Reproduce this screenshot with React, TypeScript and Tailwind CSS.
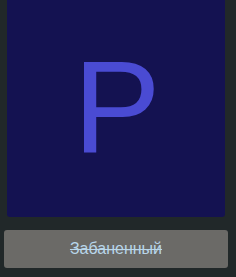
export default function App() {
  return (
    <div className="w-[236px] h-[277px] bg-[#212829] flex flex-col" style={{ fontFamily: '"Liberation Sans", Arial, sans-serif' }}>
      <div className="px-[7px] w-full">
        <div className="h-[217px] w-[218px] bg-[#141251] rounded-b-[3px] flex items-center justify-center">
          <span className="text-[131px] leading-none text-[#4a4bd3] mt-[-4px] ml-[2px]" style={{ fontFamily: '"Liberation Sans", Arial, sans-serif' }}>P</span>
        </div>
      </div>
      <div className="px-[4px] mt-[13px]">
        <div className="h-[38px] w-[224px] bg-[#6b6a67] rounded-[3px] flex items-center justify-center">
          <span className="text-[16px] text-[#b8d6ea] line-through">Забаненный</span>
        </div>
      </div>
    </div>
  );
}
